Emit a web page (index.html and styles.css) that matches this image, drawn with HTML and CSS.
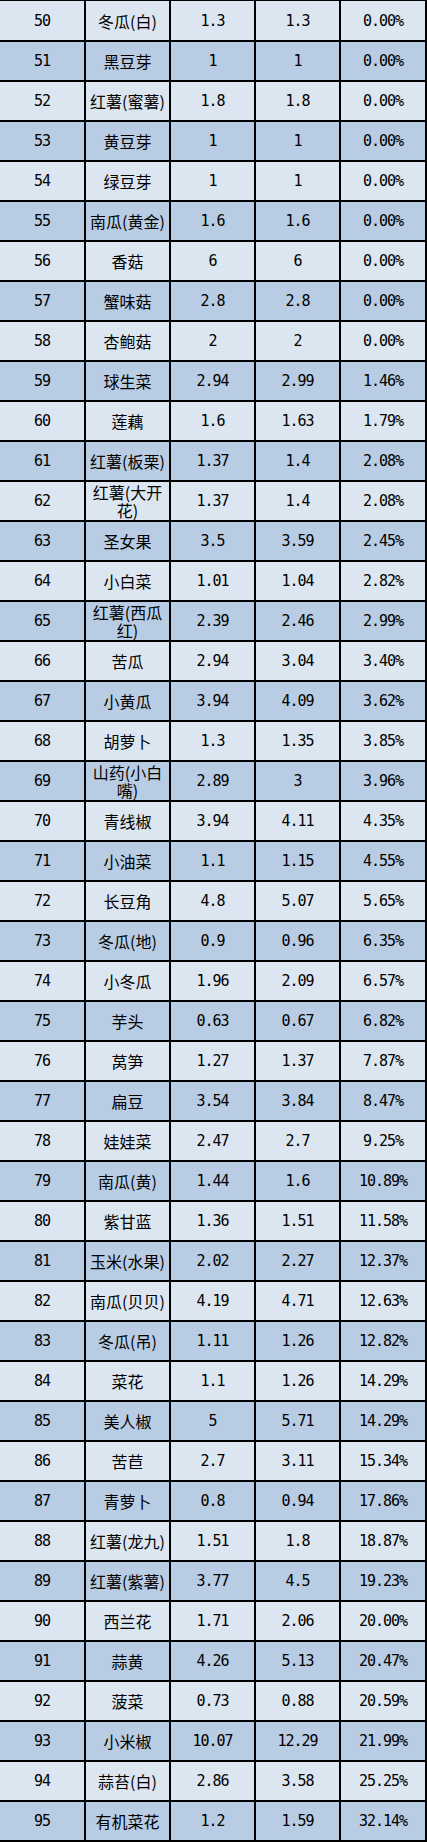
FILE: index.html
```html
<!DOCTYPE html>
<html lang="zh">
<head>
<meta charset="utf-8">
<title>价格表</title>
<link rel="stylesheet" href="styles.css">
</head>
<body>
<div class="sheet">
<div class="row light"><div class="c n">50</div><div class="c t">冬瓜(白)</div><div class="c n">1.3</div><div class="c n">1.3</div><div class="c n">0.00%</div></div>
<div class="row dark"><div class="c n">51</div><div class="c t">黑豆芽</div><div class="c n">1</div><div class="c n">1</div><div class="c n">0.00%</div></div>
<div class="row light"><div class="c n">52</div><div class="c t">红薯(蜜薯)</div><div class="c n">1.8</div><div class="c n">1.8</div><div class="c n">0.00%</div></div>
<div class="row dark"><div class="c n">53</div><div class="c t">黄豆芽</div><div class="c n">1</div><div class="c n">1</div><div class="c n">0.00%</div></div>
<div class="row light"><div class="c n">54</div><div class="c t">绿豆芽</div><div class="c n">1</div><div class="c n">1</div><div class="c n">0.00%</div></div>
<div class="row dark"><div class="c n">55</div><div class="c t">南瓜(黄金)</div><div class="c n">1.6</div><div class="c n">1.6</div><div class="c n">0.00%</div></div>
<div class="row light"><div class="c n">56</div><div class="c t">香菇</div><div class="c n">6</div><div class="c n">6</div><div class="c n">0.00%</div></div>
<div class="row dark"><div class="c n">57</div><div class="c t">蟹味菇</div><div class="c n">2.8</div><div class="c n">2.8</div><div class="c n">0.00%</div></div>
<div class="row light"><div class="c n">58</div><div class="c t">杏鲍菇</div><div class="c n">2</div><div class="c n">2</div><div class="c n">0.00%</div></div>
<div class="row dark"><div class="c n">59</div><div class="c t">球生菜</div><div class="c n">2.94</div><div class="c n">2.99</div><div class="c n">1.46%</div></div>
<div class="row light"><div class="c n">60</div><div class="c t">莲藕</div><div class="c n">1.6</div><div class="c n">1.63</div><div class="c n">1.79%</div></div>
<div class="row dark"><div class="c n">61</div><div class="c t">红薯(板栗)</div><div class="c n">1.37</div><div class="c n">1.4</div><div class="c n">2.08%</div></div>
<div class="row light"><div class="c n">62</div><div class="c t">红薯(大开花)</div><div class="c n">1.37</div><div class="c n">1.4</div><div class="c n">2.08%</div></div>
<div class="row dark"><div class="c n">63</div><div class="c t">圣女果</div><div class="c n">3.5</div><div class="c n">3.59</div><div class="c n">2.45%</div></div>
<div class="row light"><div class="c n">64</div><div class="c t">小白菜</div><div class="c n">1.01</div><div class="c n">1.04</div><div class="c n">2.82%</div></div>
<div class="row dark"><div class="c n">65</div><div class="c t">红薯(西瓜红)</div><div class="c n">2.39</div><div class="c n">2.46</div><div class="c n">2.99%</div></div>
<div class="row light"><div class="c n">66</div><div class="c t">苦瓜</div><div class="c n">2.94</div><div class="c n">3.04</div><div class="c n">3.40%</div></div>
<div class="row dark"><div class="c n">67</div><div class="c t">小黄瓜</div><div class="c n">3.94</div><div class="c n">4.09</div><div class="c n">3.62%</div></div>
<div class="row light"><div class="c n">68</div><div class="c t">胡萝卜</div><div class="c n">1.3</div><div class="c n">1.35</div><div class="c n">3.85%</div></div>
<div class="row dark"><div class="c n">69</div><div class="c t">山药(小白嘴)</div><div class="c n">2.89</div><div class="c n">3</div><div class="c n">3.96%</div></div>
<div class="row light"><div class="c n">70</div><div class="c t">青线椒</div><div class="c n">3.94</div><div class="c n">4.11</div><div class="c n">4.35%</div></div>
<div class="row dark"><div class="c n">71</div><div class="c t">小油菜</div><div class="c n">1.1</div><div class="c n">1.15</div><div class="c n">4.55%</div></div>
<div class="row light"><div class="c n">72</div><div class="c t">长豆角</div><div class="c n">4.8</div><div class="c n">5.07</div><div class="c n">5.65%</div></div>
<div class="row dark"><div class="c n">73</div><div class="c t">冬瓜(地)</div><div class="c n">0.9</div><div class="c n">0.96</div><div class="c n">6.35%</div></div>
<div class="row light"><div class="c n">74</div><div class="c t">小冬瓜</div><div class="c n">1.96</div><div class="c n">2.09</div><div class="c n">6.57%</div></div>
<div class="row dark"><div class="c n">75</div><div class="c t">芋头</div><div class="c n">0.63</div><div class="c n">0.67</div><div class="c n">6.82%</div></div>
<div class="row light"><div class="c n">76</div><div class="c t">莴笋</div><div class="c n">1.27</div><div class="c n">1.37</div><div class="c n">7.87%</div></div>
<div class="row dark"><div class="c n">77</div><div class="c t">扁豆</div><div class="c n">3.54</div><div class="c n">3.84</div><div class="c n">8.47%</div></div>
<div class="row light"><div class="c n">78</div><div class="c t">娃娃菜</div><div class="c n">2.47</div><div class="c n">2.7</div><div class="c n">9.25%</div></div>
<div class="row dark"><div class="c n">79</div><div class="c t">南瓜(黄)</div><div class="c n">1.44</div><div class="c n">1.6</div><div class="c n">10.89%</div></div>
<div class="row light"><div class="c n">80</div><div class="c t">紫甘蓝</div><div class="c n">1.36</div><div class="c n">1.51</div><div class="c n">11.58%</div></div>
<div class="row dark"><div class="c n">81</div><div class="c t">玉米(水果)</div><div class="c n">2.02</div><div class="c n">2.27</div><div class="c n">12.37%</div></div>
<div class="row light"><div class="c n">82</div><div class="c t">南瓜(贝贝)</div><div class="c n">4.19</div><div class="c n">4.71</div><div class="c n">12.63%</div></div>
<div class="row dark"><div class="c n">83</div><div class="c t">冬瓜(吊)</div><div class="c n">1.11</div><div class="c n">1.26</div><div class="c n">12.82%</div></div>
<div class="row light"><div class="c n">84</div><div class="c t">菜花</div><div class="c n">1.1</div><div class="c n">1.26</div><div class="c n">14.29%</div></div>
<div class="row dark"><div class="c n">85</div><div class="c t">美人椒</div><div class="c n">5</div><div class="c n">5.71</div><div class="c n">14.29%</div></div>
<div class="row light"><div class="c n">86</div><div class="c t">苦苣</div><div class="c n">2.7</div><div class="c n">3.11</div><div class="c n">15.34%</div></div>
<div class="row dark"><div class="c n">87</div><div class="c t">青萝卜</div><div class="c n">0.8</div><div class="c n">0.94</div><div class="c n">17.86%</div></div>
<div class="row light"><div class="c n">88</div><div class="c t">红薯(龙九)</div><div class="c n">1.51</div><div class="c n">1.8</div><div class="c n">18.87%</div></div>
<div class="row dark"><div class="c n">89</div><div class="c t">红薯(紫薯)</div><div class="c n">3.77</div><div class="c n">4.5</div><div class="c n">19.23%</div></div>
<div class="row light"><div class="c n">90</div><div class="c t">西兰花</div><div class="c n">1.71</div><div class="c n">2.06</div><div class="c n">20.00%</div></div>
<div class="row dark"><div class="c n">91</div><div class="c t">蒜黄</div><div class="c n">4.26</div><div class="c n">5.13</div><div class="c n">20.47%</div></div>
<div class="row light"><div class="c n">92</div><div class="c t">菠菜</div><div class="c n">0.73</div><div class="c n">0.88</div><div class="c n">20.59%</div></div>
<div class="row dark"><div class="c n">93</div><div class="c t">小米椒</div><div class="c n">10.07</div><div class="c n">12.29</div><div class="c n">21.99%</div></div>
<div class="row light"><div class="c n">94</div><div class="c t">蒜苔(白)</div><div class="c n">2.86</div><div class="c n">3.58</div><div class="c n">25.25%</div></div>
<div class="row dark"><div class="c n">95</div><div class="c t">有机菜花</div><div class="c n">1.2</div><div class="c n">1.59</div><div class="c n">32.14%</div></div>
</div>
</body>
</html>
```

FILE: styles.css
```css
html, body {
  margin: 0;
  padding: 0;
  background: #ffffff;
}

body {
  width: 427px;
  height: 1842px;
}

.sheet {
  display: grid;
  grid-template-columns: 84px 83px 83px 83px 84px;
  grid-template-rows: 39px;
  grid-auto-rows: 38px;
  gap: 2px;
  padding: 1px 2px 2px 0;
  width: 427px;
  box-sizing: border-box;
  background: #000000;
}

.row {
  display: contents;
}

.c {
  display: flex;
  align-items: center;
  justify-content: center;
  text-align: center;
  color: #000000;
  min-width: 0;
}

.light > .c {
  background: #dce6f1;
}

.dark > .c {
  background: #b8cce4;
}

.t {
  font-family: "Noto Sans CJK SC", "Noto Sans", sans-serif;
  font-size: 16px;
  line-height: 18px;
  padding: 0 2px;
}

.n {
  font-family: "DejaVu Sans Mono", "Liberation Mono", monospace;
  font-size: 15px;
  letter-spacing: -1px;
}
```
